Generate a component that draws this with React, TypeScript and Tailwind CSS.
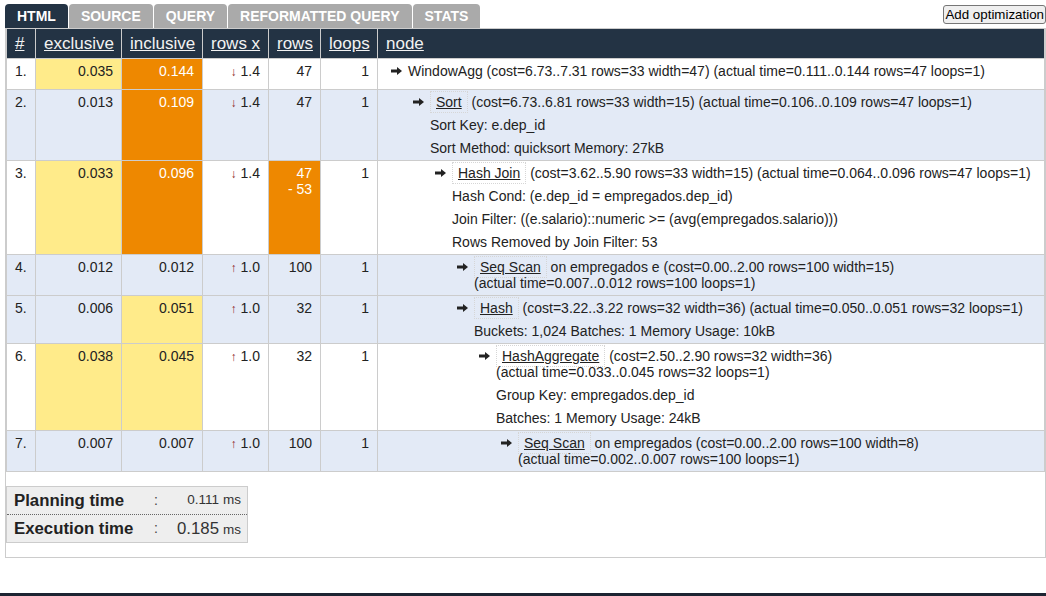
const YELLOW = 'bg-[#ffeb8a]'
const ORANGE = 'bg-[#ee8800] text-white'

type PlanRow = {
  n: string
  ex: string
  exBg?: string
  inc: string
  incBg?: string
  dir: string
  rx: string
  rows: string[]
  rowsBg?: string
  loops: string
  bg: string
  indent: string
  name: string
  boxed: boolean
  rest: string
  cost: string
  actual: string
  details: string[]
  tall?: boolean
}

const plan: PlanRow[] = [
  {
    n: '1.', ex: '0.035', exBg: YELLOW, inc: '0.144', incBg: ORANGE, dir: '↓', rx: '1.4', rows: ['47'], loops: '1',
    bg: 'bg-white', indent: 'pl-[13px]', name: 'WindowAgg', boxed: false, rest: '',
    cost: '(cost=6.73..7.31 rows=33 width=47)', actual: '(actual time=0.111..0.144 rows=47 loops=1)', details: [], tall: true,
  },
  {
    n: '2.', ex: '0.013', inc: '0.109', incBg: ORANGE, dir: '↓', rx: '1.4', rows: ['47'], loops: '1',
    bg: 'bg-[#e3eaf6]', indent: 'pl-[35px]', name: 'Sort', boxed: true, rest: '',
    cost: '(cost=6.73..6.81 rows=33 width=15)', actual: '(actual time=0.106..0.109 rows=47 loops=1)',
    details: ['Sort Key: e.dep_id', 'Sort Method: quicksort Memory: 27kB'],
  },
  {
    n: '3.', ex: '0.033', exBg: YELLOW, inc: '0.096', incBg: ORANGE, dir: '↓', rx: '1.4', rows: ['47', '- 53'], rowsBg: ORANGE, loops: '1',
    bg: 'bg-white', indent: 'pl-[57px]', name: 'Hash Join', boxed: true, rest: '',
    cost: '(cost=3.62..5.90 rows=33 width=15)', actual: '(actual time=0.064..0.096 rows=47 loops=1)',
    details: [
      'Hash Cond: (e.dep_id = empregados.dep_id)',
      'Join Filter: ((e.salario)::numeric >= (avg(empregados.salario)))',
      'Rows Removed by Join Filter: 53',
    ],
  },
  {
    n: '4.', ex: '0.012', inc: '0.012', dir: '↑', rx: '1.0', rows: ['100'], loops: '1',
    bg: 'bg-[#e3eaf6]', indent: 'pl-[79px]', name: 'Seq Scan', boxed: true, rest: 'on empregados e',
    cost: '(cost=0.00..2.00 rows=100 width=15)', actual: '(actual time=0.007..0.012 rows=100 loops=1)', details: [],
  },
  {
    n: '5.', ex: '0.006', inc: '0.051', incBg: YELLOW, dir: '↑', rx: '1.0', rows: ['32'], loops: '1',
    bg: 'bg-[#e3eaf6]', indent: 'pl-[79px]', name: 'Hash', boxed: true, rest: '',
    cost: '(cost=3.22..3.22 rows=32 width=36)', actual: '(actual time=0.050..0.051 rows=32 loops=1)',
    details: ['Buckets: 1,024 Batches: 1 Memory Usage: 10kB'],
  },
  {
    n: '6.', ex: '0.038', exBg: YELLOW, inc: '0.045', incBg: YELLOW, dir: '↑', rx: '1.0', rows: ['32'], loops: '1',
    bg: 'bg-white', indent: 'pl-[101px]', name: 'HashAggregate', boxed: true, rest: '',
    cost: '(cost=2.50..2.90 rows=32 width=36)', actual: '(actual time=0.033..0.045 rows=32 loops=1)',
    details: ['Group Key: empregados.dep_id', 'Batches: 1 Memory Usage: 24kB'],
  },
  {
    n: '7.', ex: '0.007', inc: '0.007', dir: '↑', rx: '1.0', rows: ['100'], loops: '1',
    bg: 'bg-[#e3eaf6]', indent: 'pl-[123px]', name: 'Seq Scan', boxed: true, rest: 'on empregados',
    cost: '(cost=0.00..2.00 rows=100 width=8)', actual: '(actual time=0.002..0.007 rows=100 loops=1)', details: [],
  },
]

const tabs = ['HTML', 'SOURCE', 'QUERY', 'REFORMATTED QUERY', 'STATS']
const headers = ['#', 'exclusive', 'inclusive', 'rows x', 'rows', 'loops', 'node']

function Arrow() {
  return (
    <svg width="11" height="8" viewBox="0 0 11 8" className="mt-[4px] mr-[6px] shrink-0">
      <path d="M0 2.6h6V0l5 4-5 4V5.4H0z" fill="#222" />
    </svg>
  )
}

function PlanLine({ r }: { r: PlanRow }) {
  const cell = 'border-r border-b border-[#cccccc] pt-[4px] leading-4'
  const pb = r.tall ? 'pb-[9px]' : 'pb-[4px]'
  return (
    <>
      <div className={`${cell} ${pb} ${r.bg} pl-[8px]`}>{r.n}</div>
      <div className={`${cell} ${pb} ${r.exBg ?? r.bg} text-right pr-[8px]`}>{r.ex}</div>
      <div className={`${cell} ${pb} ${r.incBg ?? r.bg} text-right pr-[8px]`}>{r.inc}</div>
      <div className={`${cell} ${pb} ${r.bg} text-right pr-[8px]`}>
        <span className="text-[12px] text-[#8b1f1f] mr-[4px]">{r.dir}</span>
        {r.rx}
      </div>
      <div className={`${cell} ${pb} ${r.rowsBg ?? r.bg} text-right pr-[8px]`}>
        {r.rows.map((v) => (
          <div key={v}>{v}</div>
        ))}
      </div>
      <div className={`${cell} ${pb} ${r.bg} text-right pr-[8px]`}>{r.loops}</div>
      <div className={`${cell} ${pb} ${r.bg} ${r.indent} pr-[8px] flex`}>
        <Arrow />
        <div className="flex-1 min-w-0">
          <div>
            {r.boxed ? (
              <span className="underline px-[5px] py-[2px] border border-dotted border-[#d6d6d6]">{r.name}</span>
            ) : (
              <span>{r.name}</span>
            )}{' '}
            {r.rest && <>{r.rest} </>}
            <span className="whitespace-nowrap">{r.cost}</span>{' '}
            <span className="whitespace-nowrap">{r.actual}</span>
          </div>
          {r.details.map((d) => (
            <div key={d} className="mt-[7px]">{d}</div>
          ))}
        </div>
      </div>
    </>
  )
}

export default function App() {
  return (
    <div className="min-h-screen bg-white font-['Liberation_Sans',Arial,sans-serif] text-[14px] text-[#222] pt-[4px]">
      {/* Tabs + action */}
      <div className="flex items-start justify-between">
        <div className="flex gap-px ml-[5px]">
          {tabs.map((t, i) => (
            <div
              key={t}
              className={`h-[24px] px-[12px] flex items-center rounded-t-[4px] font-bold text-white text-[14px] ${
                i === 0 ? 'bg-[#233344]' : 'bg-[#aaaaaa]'
              }`}
            >
              {t}
            </div>
          ))}
        </div>
        <button className="mt-[1px] h-[19px] px-[1px] bg-[#efefef] border border-[#767676] rounded-[3px] text-[13.33px] leading-[15px] text-black">
          Add optimization
        </button>
      </div>

      {/* Explain table */}
      <div className="ml-[5px] w-[1041px] border border-[#cccccc]">
        <div className="grid grid-cols-[29px_86px_81px_66px_52px_57px_1fr] border-l border-[#cccccc]">
          {headers.map((h) => (
            <div
              key={h}
              className="h-[30px] bg-[#233344] border-r border-b border-[#cccccc] pl-[8px] flex items-center text-[17px] text-[#f2f2f2] underline"
            >
              {h}
            </div>
          ))}
          {plan.map((r) => (
            <PlanLine key={r.n} r={r} />
          ))}
        </div>

        {/* Timing summary */}
        <div className="mt-[14px] mb-[14px] w-[242px] bg-[#eeeeee] border border-[#cccccc]">
          <div className="h-[28px] flex items-center pl-[7px] pr-[6px] border-b border-dotted border-[#666666]">
            <div className="w-[134px] font-bold text-[16.8px]">Planning time</div>
            <div className="w-[16px] text-center text-[#444]">:</div>
            <div className="flex-1 flex items-baseline justify-end text-[#333]">
              <span className="text-[13.5px]">0.111</span>
              <span className="ml-[4px] text-[13.5px]">ms</span>
            </div>
          </div>
          <div className="h-[27px] flex items-center pl-[7px] pr-[6px]">
            <div className="w-[134px] font-bold text-[16.8px]">Execution time</div>
            <div className="w-[16px] text-center text-[#444]">:</div>
            <div className="flex-1 flex items-baseline justify-end text-[#333]">
              <span className="text-[16.8px]">0.185</span>
              <span className="ml-[4px] text-[13.5px]">ms</span>
            </div>
          </div>
        </div>
      </div>

      <div className="mt-[35px] h-[3px] bg-[#1d2432]" />
    </div>
  )
}
